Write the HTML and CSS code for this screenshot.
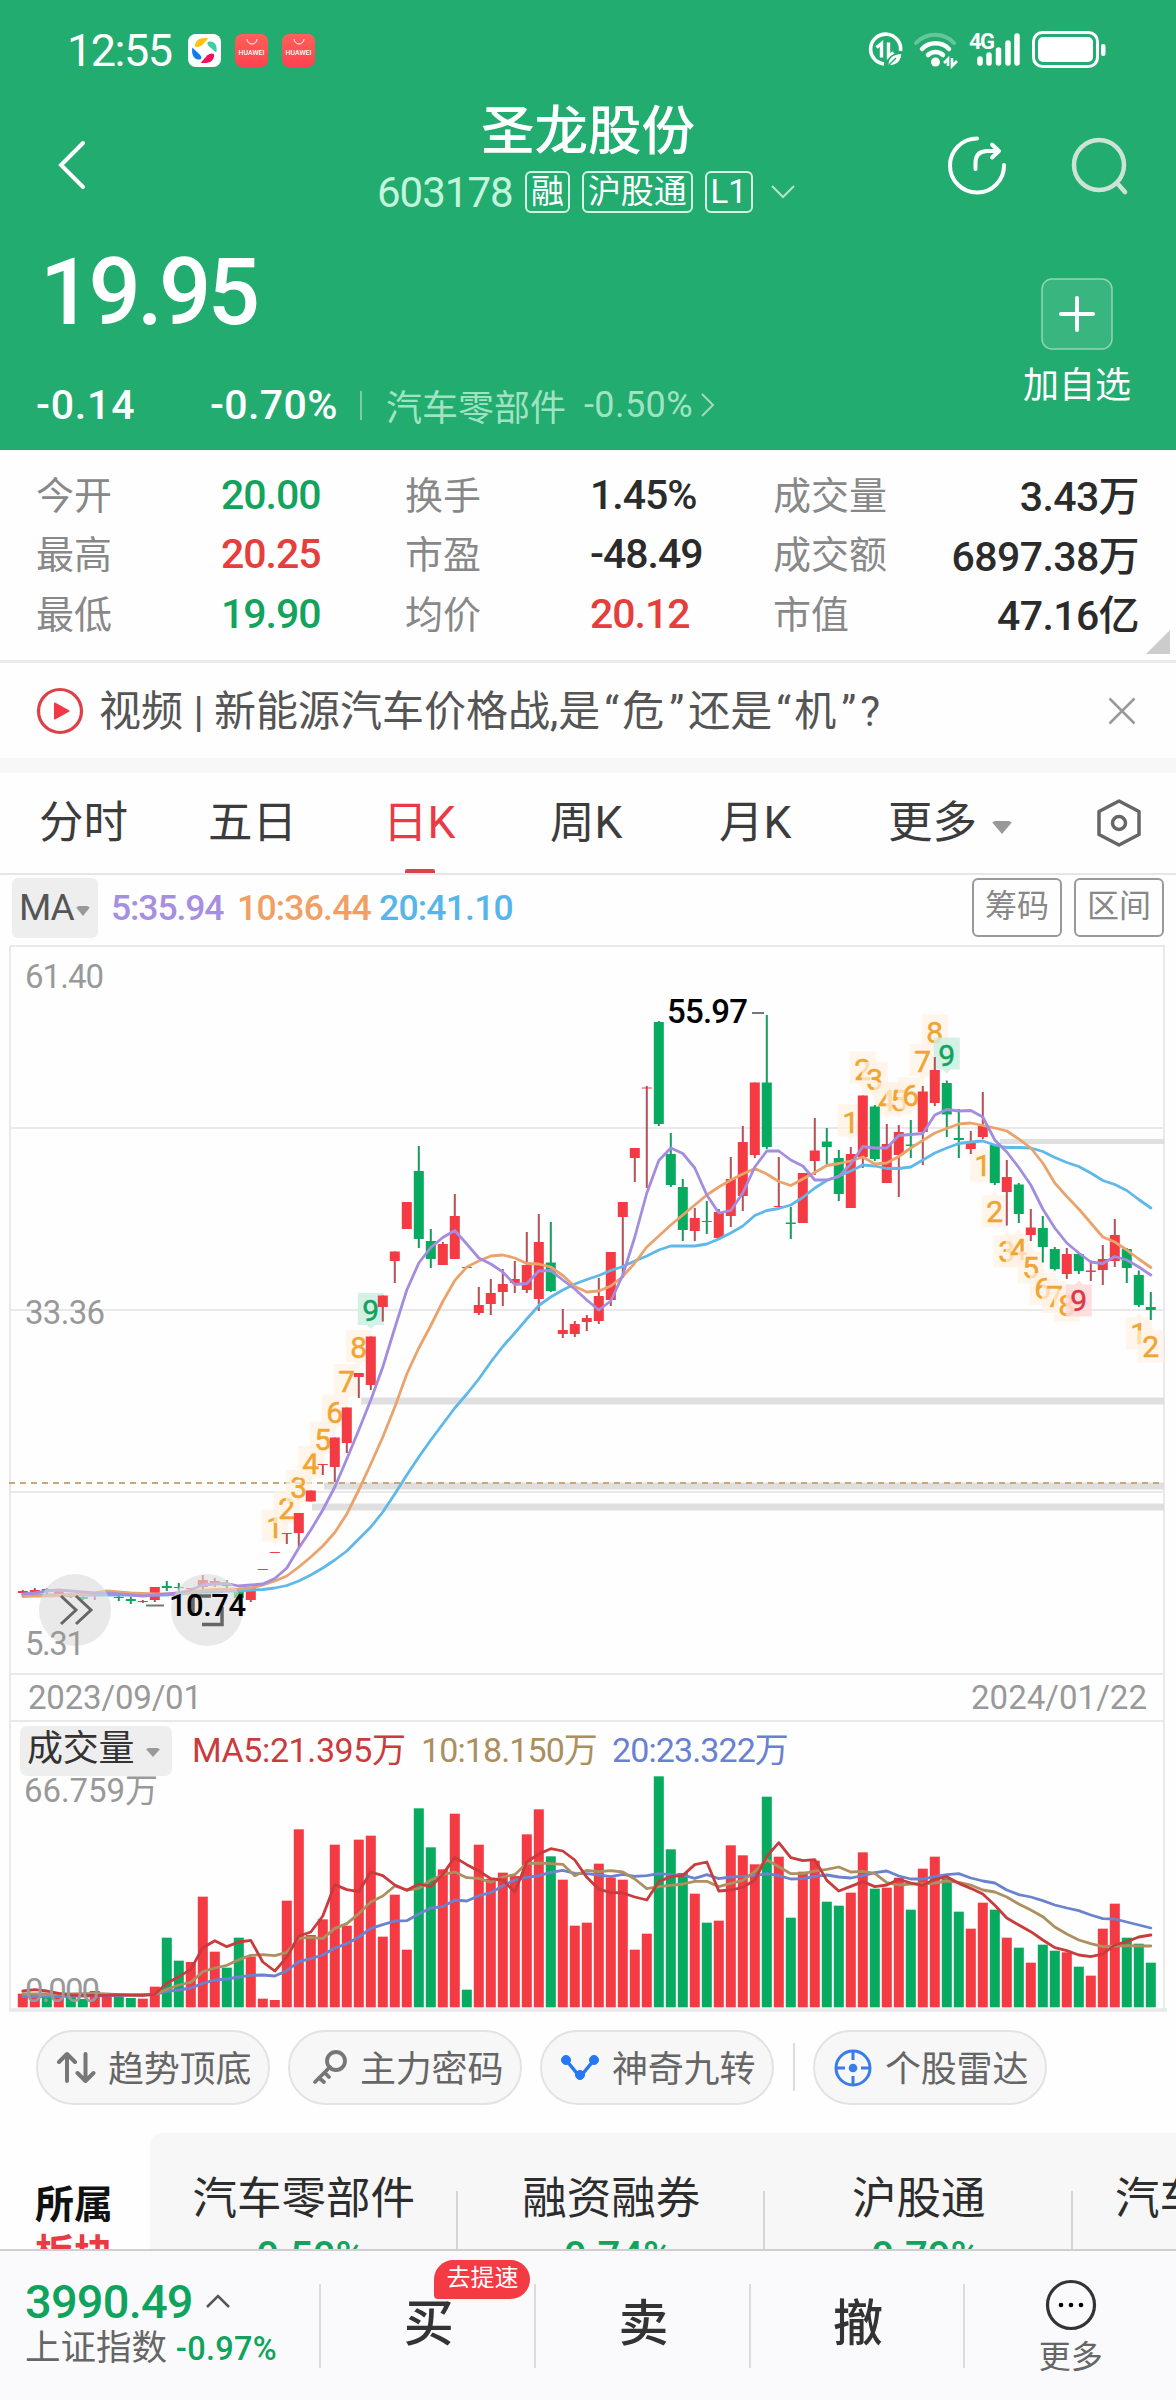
FILE: index.html
```html
<!DOCTYPE html>
<html lang="zh-CN">
<head>
    <meta charset="UTF-8">
    <meta name="viewport" content="width=device-width, initial-scale=1.0">
    <title>圣龙股份 603178</title>
    <link rel="stylesheet" href="styles.css">
</head>
<body>
    <div class="header">
        <div class="status-bar">
            <span class="clock">12:55</span>
            <svg class="app-icon" viewBox="0 0 34 34">
                <rect width="34" height="34" rx="8" fill="#fff"/>
                <path d="M7 13C7 6 13 3 21 4.500L14 12Q10 14 7 13Z" fill="#fdc40f"/>
                <path d="M21 8C27 6 31 12 29 19L21 12Q19 9 21 8Z" fill="#3ccfa4"/>
                <path d="M27 21C27 28 21 31 13 29.500L20 22Q24 19 27 21Z" fill="#f3115c"/>
                <path d="M13 26C7 28 3 22 4.500 14L12 21Q15 24 13 26Z" fill="#0c7cf5"/>
            </svg>
            <div class="huawei"><svg width="12" height="7" viewBox="0 0 12 7"><path d="M1 0a5 5 0 0 0 10 0" fill="none" stroke="#fff" stroke-width="1"/></svg>HUAWEI</div>
            <div class="huawei"><svg width="12" height="7" viewBox="0 0 12 7"><path d="M1 0a5 5 0 0 0 10 0" fill="none" stroke="#fff" stroke-width="1"/></svg>HUAWEI</div>
            <svg class="status-icons" width="240" height="40" viewBox="0 0 240 40" fill="none" stroke="#fff">
                <path d="M32.500 21A15 15 0 1 0 16 34" stroke-width="3.600"/>
                <path d="M8.500 17.500l5-4v14M20.500 12.500v14l5-4" stroke-width="3.400"/>
                <path d="M34 23c-10 1-15 5-14 13 9 0 14-4 14-13z" fill="#fff" stroke="#22ac70" stroke-width="1.500"/>
                <path d="M21 35l7-7" stroke="#22ac70" stroke-width="1.500"/>
                <path d="M48 13a26 26 0 0 1 38 0" stroke="#66c69b" stroke-width="4" stroke-linecap="round"/>
                <path d="M54 19a19 19 0 0 1 27 0M60 25a11 11 0 0 1 15 0" stroke-width="4.500" stroke-linecap="round"/>
                <circle cx="67.500" cy="32" r="4.500" fill="#fff" stroke="none"/>
                <path d="M76 33l4-4v7M84 28v8l5-5" stroke-width="2.600"/>
                <text x="101" y="19" class="net">4G</text>
                <path d="M112 29v4M121 25v8M130.500 20v13M140 13v20M149 6v27" stroke-width="5.500" stroke-linecap="round"/>
                <rect x="165.500" y="2.500" width="64" height="34" rx="9" stroke-width="3"/>
                <rect x="170" y="7" width="55" height="25" rx="5" fill="#fff" stroke="none"/>
                <rect x="233" y="14" width="4.500" height="12" rx="2" fill="#fff" stroke="none"/>
            </svg>
        </div>
        <div class="nav">
            <svg class="back" width="28" height="50" viewBox="0 0 28 50"><path d="M25 3L3 25l22 22" fill="none" stroke="#fff" stroke-width="4" stroke-linecap="round"/></svg>
            <div class="title">
                <h1>圣龙股份</h1>
                <div class="code-row">
                    <span class="code">603178</span>
                    <span class="tag">融</span>
                    <span class="tag">沪股通</span>
                    <span class="tag">L1</span>
                    <svg width="24" height="14" viewBox="0 0 24 14"><path d="M1 1l11 11L23 1" fill="none" stroke="#b5e3cc" stroke-width="2"/></svg>
                </div>
            </div>
            <svg class="share" width="60" height="60" viewBox="0 0 60 60" fill="none" stroke="#fff" stroke-width="4" stroke-linecap="round" stroke-linejoin="round">
                <path d="M30 3.500A27 27 0 1 0 57 30M28.500 34v-6q0-12 12-12H51M45 9.500l7 6.500-7 6.500"/>
            </svg>
            <svg class="search" width="58" height="60" viewBox="0 0 58 60" fill="none" stroke="#cde3d6" stroke-width="4.500" stroke-linecap="round">
                <circle cx="28" cy="30" r="25"/><path d="M46 48l8 9"/>
            </svg>
        </div>
        <div class="quote">
            <div>
                <div class="price">19.95</div>
                <div class="change">
                    <span class="diff">-0.14</span>
                    <span class="pct">-0.70%</span>
                    <span class="industry">汽车零部件</span>
                    <span class="industry-pct">-0.50%</span>
                    <svg width="14" height="26" viewBox="0 0 14 26"><path d="M1 2l11 11L1 24" fill="none" stroke="#a0dabd" stroke-width="2"/></svg>
                </div>
            </div>
            <div class="add">
                <svg width="72" height="72" viewBox="0 0 72 72"><rect x="1" y="1" width="70" height="70" rx="10" fill="#39b57f" stroke="#90d5b4" stroke-width="1.500"/><path d="M36 20v32M20 36h32" stroke="#fff" stroke-width="4" stroke-linecap="round"/></svg>
                <span>加自选</span>
            </div>
        </div>
    </div>

    <div class="stats">
        <span>今开</span><b class="down">20.00</b><span>换手</span><b>1.45%</b><span>成交量</span><b class="last">3.43万</b>
        <span>最高</span><b class="up">20.25</b><span>市盈</span><b>-48.49</b><span>成交额</span><b class="last">6897.38万</b>
        <span>最低</span><b class="down">19.90</b><span>均价</span><b class="up">20.12</b><span>市值</span><b class="last">47.16亿</b>
        <i class="corner"></i>
    </div>

    <div class="news">
        <svg width="48" height="48" viewBox="0 0 48 48"><circle cx="24" cy="24" r="21.500" fill="none" stroke="#df3f49" stroke-width="3.200"/><path d="M19 16.500l13.500 7.500L19 31.500z" fill="#f23745" stroke="#f23745" stroke-width="2" stroke-linejoin="round"/></svg>
        <p>视频 | 新能源汽车价格战,是<q>危</q>还是<q>机</q>?</p>
        <svg class="close" width="28" height="28" viewBox="0 0 28 28"><path d="M1.500 1.500l25 25M26.500 1.500l-25 25" stroke="#999" stroke-width="2.500"/></svg>
    </div>

    <div class="tabs">
        <span>分时</span>
        <span>五日</span>
        <span class="active">日K</span>
        <span>周K</span>
        <span>月K</span>
        <span class="more">更多<i class="arrow"></i></span>
        <svg width="46" height="50" viewBox="0 0 46 50" fill="none" stroke="#666" stroke-width="3.500" stroke-linejoin="round"><path d="M23 3L43 13.500v23L23 47 3 36.500v-23z"/><circle cx="23" cy="25" r="6.500"/></svg>
    </div>

    <div class="ma-row">
        <span class="ma-btn">MA<i class="arrow"></i></span>
        <span class="ma5">5:35.94</span>
        <span class="ma10">10:36.44</span>
        <span class="ma20">20:41.10</span>
        <span class="box-btn">筹码</span>
        <span class="box-btn">区间</span>
    </div>

    <div class="chart-wrap">
        <svg id="chart" width="1176" height="1072" viewBox="0 940 1176 1072">
            <g class="grid">
                <path d="M10 946H1164V2010M10 946V2010M10 1128H1164M10 1310H1164M10 1492H1164M10 1674H1164M10 1721H1164"/>
                <path d="M9 2010H1167" stroke-width="3.500"/>
            </g>
            <g class="gaps">
                <path d="M1000 1141.500H1164" stroke-width="5"/>
                <path d="M361 1401H1164M324 1486H1164M312 1507H1164" stroke-width="7"/>
            </g>
            <path d="M9 1483H1164" stroke="#c9a878" stroke-width="2" stroke-dasharray="6 5"/>
            <g id="marks"></g>
            <g id="candles"></g>
            <g id="lines"></g>
            <g class="floats">
                <circle cx="75" cy="1610" r="36"/>
                <circle cx="207" cy="1610" r="36"/>
                <path d="M61 1596l15 14-15 14M76 1596l15 14-15 14" stroke-width="3"/>
                <path d="M211 1596H193V1616M202 1624.500H222V1607" stroke-width="3.500"/>
            </g>
            <path d="M146 1605.500H164M752 1013H764" stroke="#777" stroke-width="2"/>
            <text class="extreme" x="169" y="1616" font-size="31" textLength="77">10.74</text>
            <text class="extreme" x="667" y="1023" font-size="33" textLength="81">55.97</text>
            <g class="axis" font-size="33">
                <text x="25" y="988" textLength="79">61.40</text>
                <text x="25" y="1324" textLength="80">33.36</text>
                <text x="25" y="1655" textLength="60">5.31</text>
                <text x="28" y="1709" textLength="174">2023/09/01</text>
                <text x="971" y="1709" textLength="176">2024/01/22</text>
            </g>
            <g id="volumes"></g>
            <g id="vol-lines"></g>
            <g class="axis" font-size="33">
                <text x="24" y="1802" textLength="134">66.759万</text>
                <text x="25" y="2002" textLength="75">0.000</text>
            </g>
        </svg>
        <div class="vol-row">
            <span class="vol-btn">成交量<i class="arrow"></i></span>
            <span class="v5">MA5:21.395万</span>
            <span class="v10">10:18.150万</span>
            <span class="v20">20:23.322万</span>
        </div>
    </div>

    <div class="chips">
        <span class="chip"><svg width="40" height="36" viewBox="0 0 40 36" fill="none" stroke="#777" stroke-width="4" stroke-linecap="round" stroke-linejoin="round"><path d="M11 31V4M3 12l8-8 8 8M29.500 4v27M21.500 23l8 8 8-8"/></svg><span>趋势顶底</span></span>
        <span class="chip"><svg width="40" height="36" viewBox="0 0 40 36" fill="none" stroke="#777" stroke-width="3.800" stroke-linecap="round"><circle cx="28" cy="11" r="9"/><path d="M22 17L7 32M11 28l5 4M17 23l4 4"/></svg><span>主力密码</span></span>
        <span class="chip"><svg width="40" height="36" viewBox="0 0 40 36" fill="#2577f5" stroke="#2577f5"><path d="M6 10l14 17L34 10" fill="none" stroke-width="3.500"/><circle cx="6" cy="10" r="4.500"/><circle cx="34" cy="10" r="4.500"/><circle cx="20" cy="25" r="4.500"/></svg><span>神奇九转</span></span>
        <i class="split"></i>
        <span class="chip"><svg width="40" height="40" viewBox="0 0 40 40" fill="none" stroke="#3b7de8" stroke-width="3"><circle cx="20" cy="20" r="17"/><path d="M20 3v9M20 28v9M3 20h9M28 20h9"/><circle cx="20" cy="20" r="2.800" fill="#3b7de8"/></svg><span>个股雷达</span></span>
    </div>

    <div class="board">
        <div class="board-label">所属<em>板块</em></div>
        <div class="board-list">
            <div class="board-item">汽车零部件<b>-0.50%</b></div>
            <div class="board-item">融资融券<b>-0.74%</b></div>
            <div class="board-item">沪股通<b>-0.79%</b></div>
            <div class="board-item">汽车零部件<b>-0.50%</b></div>
        </div>
    </div>

    <div class="footer">
        <div class="index">
            <div class="index-value">3990.49 <svg width="26" height="16" viewBox="0 0 26 16"><path d="M2 14L13 3l11 11" fill="none" stroke="#555" stroke-width="2.500"/></svg></div>
            <div class="index-name">上证指数 <b>-0.97%</b></div>
        </div>
        <div class="action">买<span class="badge">去提速</span></div>
        <div class="action">卖</div>
        <div class="action">撤</div>
        <div class="footer-more">
            <svg width="52" height="52" viewBox="0 0 52 52"><circle cx="26" cy="26" r="23.500" fill="none" stroke="#333" stroke-width="3.200"/><circle cx="16" cy="26" r="2.300"/><circle cx="26" cy="26" r="2.300"/><circle cx="36" cy="26" r="2.300"/></svg>
            更多
        </div>
    </div>
    <script src="chart.js"></script>
</body>
</html>
```
FILE: styles.css
```css
* {
    box-sizing: border-box;
}

body {
    margin: 0;
    width: 1176px;
    height: 2400px;
    overflow: hidden;
    background-color: #fefefe;
    color: #333;
    font-family: Roboto, "Noto Sans CJK SC", sans-serif;
}

svg {
    flex: none;
    display: block;
}

i, em {
    font-style: normal;
}

.header {
    height: 450px;
    background-color: #22ac70;
    color: #fff;
}

.status-bar {
    height: 100px;
    display: flex;
    align-items: center;
    padding-left: 67px;
}

.clock {
    width: 121px;
    font-size: 45px;
    letter-spacing: -1.5px;
}

.app-icon {
    width: 33px;
    height: 33px;
}

.huawei {
    width: 33px;
    height: 33px;
    margin-left: 14px;
    padding-top: 5px;
    border-radius: 7px;
    background: linear-gradient(#ff6158, #ff4250);
    display: flex;
    flex-direction: column;
    align-items: center;
    font-size: 7px;
    line-height: 14px;
    font-weight: 500;
}

.status-icons {
    margin-left: auto;
    margin-right: 68px;
}

.net {
    font-size: 22px;
    font-weight: 700;
    fill: #fff;
    stroke: none;
    letter-spacing: -1.5px;
}

.nav {
    height: 120px;
    display: flex;
}

.back {
    margin: 40px 0 0 58px;
}

.title {
    width: 500px;
    margin-left: 252px;
    padding-top: 2px;
    text-align: center;
}

.title h1 {
    margin: 0;
    font-size: 53.5px;
    line-height: 60px;
    font-weight: 500;
}

.code-row {
    height: 60px;
    margin-left: 39px;
    display: flex;
    align-items: center;
}

.code {
    width: 135px;
    margin-right: 13px;
    font-size: 42px;
    letter-spacing: -1px;
    color: #c3f5dc;
}

.tag {
    height: 42px;
    margin-right: 12px;
    padding: 0 4px;
    border: 2px solid #d5f6e6;
    border-radius: 6px;
    font-size: 33px;
    line-height: 37px;
    letter-spacing: -0.1px;
}

.tag + svg {
    margin-left: 6px;
}

.share {
    margin: 35px 0 0 109px;
}

.search {
    margin: 35px 0 0 64px;
}

.quote {
    height: 230px;
    display: flex;
    justify-content: space-between;
}

.price {
    height: 146px;
    padding-left: 40px;
    font-size: 92px;
    line-height: 146px;
    font-weight: 500;
    letter-spacing: -3.7px;
}

.change {
    height: 78px;
    display: flex;
    align-items: center;
    padding-left: 36px;
    font-size: 41px;
    font-weight: 500;
}

.diff {
    width: 174px;
    letter-spacing: 0.8px;
}

.pct {
    width: 152px;
    position: relative;
    letter-spacing: 0.4px;
}

.pct::after {
    content: "";
    position: absolute;
    right: 0;
    top: 10px;
    width: 2px;
    height: 29px;
    background-color: #7acda6;
}

.industry, .industry-pct {
    margin-left: 24px;
    font-size: 36px;
    font-weight: 400;
    color: #a0e3c2;
}

.industry-pct {
    margin: 0 8px 0 18px;
    letter-spacing: 0.4px;
}

.add {
    width: 110px;
    margin-right: 44px;
    padding-top: 58px;
    display: flex;
    flex-direction: column;
    align-items: center;
    font-size: 36px;
    line-height: 73px;
}

.stats {
    position: relative;
    height: 213px;
    padding: 15px 37px 0 36px;
    border-bottom: 3px solid #eaeaea;
    display: grid;
    grid-template-columns: 185px 184px 185px 183px 130px 1fr;
    grid-auto-rows: 59.5px;
    align-items: center;
    font-size: 38px;
    color: #888;
}

.stats span {
    margin-top: -5px;
}

.stats b {
    font-size: 41px;
    font-weight: 500;
    letter-spacing: -1px;
    color: #2b2b2b;
}

.stats .last {
    text-align: right;
    white-space: nowrap;
    letter-spacing: -0.6px;
    margin-top: -3px;
}

.stats .up {
    color: #e53e3c;
}

.stats .down {
    color: #13a35d;
}

.corner {
    position: absolute;
    right: 6px;
    bottom: 6px;
    border-left: 24px solid transparent;
    border-bottom: 24px solid #ccc;
}

.news {
    height: 95px;
    padding: 0 40px 0 36px;
    display: flex;
    align-items: center;
}

.news p {
    margin: 0 0 6px 15px;
    font-size: 42px;
    color: #555;
}

.news q {
    quotes: "“" "”";
}

.news q::before {
    margin: 0 3px 0 4px;
}

.news q::after {
    margin: 0 4px 0 5px;
}

.close {
    margin-left: auto;
}

.tabs {
    height: 117px;
    padding: 0 34px 0 39px;
    border-top: 15px solid #f7f7f7;
    border-bottom: 2px solid #e6e6e6;
    display: flex;
    align-items: center;
    font-size: 44.5px;
    color: #3c3c3c;
}

.tabs span {
    height: 100%;
    line-height: 100px;
    width: 169px;
}

.tabs .active {
    position: relative;
    width: 173px;
    color: #ea3a44;
    padding-left: 6px;
}

.tabs .active::after {
    content: "";
    position: absolute;
    left: 28px;
    bottom: 0;
    width: 30px;
    height: 4px;
    border-radius: 2px 2px 0 0;
    background-color: #d9434c;
}

.tabs .more {
    width: 150px;
    white-space: nowrap;
}

.tabs svg {
    margin-left: auto;
}

.arrow {
    display: inline-block;
    border: 11px solid transparent;
    border-top: 13px solid #999;
    border-bottom: 0;
    border-radius: 5px;
    vertical-align: 4px;
}

.more .arrow {
    margin-left: 14px;
}

.ma-row {
    height: 65px;
    padding: 0 12px;
    display: flex;
    align-items: center;
    font-size: 35.5px;
    font-weight: 500;
    letter-spacing: -1.1px;
}

.ma-btn {
    width: 86px;
    height: 60px;
    margin-right: 13px;
    padding-left: 7px;
    border-radius: 6px;
    background-color: #eee;
    font-size: 37px;
    font-weight: 400;
    line-height: 60px;
    color: #555;
    white-space: nowrap;
}

.ma-btn .arrow {
    border-width: 10px 8px 0;
    margin-left: 1px;
}

.ma5 {
    color: #a68fe0;
    width: 126px;
}

.ma10 {
    color: #f0a064;
    width: 142px;
    letter-spacing: -0.8px;
}

.ma20 {
    color: #57b5ea;
    margin-right: auto;
    letter-spacing: -0.8px;
}

.box-btn {
    width: 90px;
    height: 59px;
    margin-left: 12px;
    border: 2px solid #999;
    border-radius: 6px;
    text-align: center;
    font-size: 32px;
    font-weight: 400;
    line-height: 52px;
    letter-spacing: 0;
    color: #888;
}

.chart-wrap {
    position: relative;
    height: 1072px;
}

.grid {
    fill: none;
    stroke: #e9e9e9;
    stroke-width: 2;
}

.gaps {
    stroke: #dfdfdf;
}

.floats circle {
    fill: #dcdcdc;
    fill-opacity: 0.62;
}

.floats path {
    fill: none;
    stroke: #666;
}

.extreme {
    fill: #000;
    font-weight: 500;
}

.axis {
    fill: #999;
}

.red {
    fill: #f43a43;
}

.green {
    fill: #06ab5f;
}

.wick-red {
    fill: #b55058;
}

.wick-green {
    fill: #149c5c;
}

.line {
    fill: none;
    stroke-width: 2.8;
    stroke-linejoin: round;
    stroke-linecap: round;
}

.mark path {
    fill: #fff1e3;
    fill-opacity: 0.72;
}

.mark text {
    font-size: 30px;
    text-anchor: middle;
    fill: #f0a431;
    stroke: #f0a431;
    stroke-width: 0.5;
}

.mark.sell path {
    fill: #ccefe0;
    fill-opacity: 0.85;
}

.mark.sell text {
    fill: #10a35d;
    stroke: #10a35d;
}

.mark.buy path {
    fill: #ffd8db;
    fill-opacity: 0.85;
}

.mark.buy text {
    fill: #dd3847;
    stroke: #dd3847;
}

.vol-row {
    position: absolute;
    left: 20px;
    top: 786px;
    height: 50px;
    display: flex;
    align-items: center;
    font-size: 34px;
    line-height: 46px;
    letter-spacing: -0.9px;
}

.vol-row span {
    margin-top: -3px;
}

.vol-row .vol-btn {
    width: 152px;
    height: 50px;
    margin: 0 20px 0 0;
    padding-left: 7px;
    border-radius: 7px;
    background-color: #eee;
    font-size: 36px;
    letter-spacing: -0.3px;
    line-height: 47px;
    white-space: nowrap;
}

.vol-btn .arrow {
    margin-left: 11px;
    border-width: 9px 8px 0;
}

.v5 {
    width: 229px;
    color: #c93b3c;
    letter-spacing: -0.4px;
}

.v10 {
    width: 191px;
    color: #ab8f5f;
}

.v20 {
    color: #6881d0;
}

.chips {
    height: 121px;
    padding: 18px 36px 0;
    display: flex;
    align-items: flex-start;
}

.chip {
    width: 234px;
    height: 75px;
    margin-right: 18px;
    padding-left: 18px;
    border: 2px solid #e3e3e3;
    border-radius: 38px;
    background-color: #f7f7f7;
    display: flex;
    align-items: center;
    font-size: 36px;
    letter-spacing: -0.2px;
    color: #666;
    white-space: nowrap;
}

.chip svg {
    margin-right: 12px;
}

.chip span {
    margin-top: -4px;
}

.split {
    width: 2px;
    height: 48px;
    margin: 13px 18px 0 1px;
    background-color: #ddd;
}

.board {
    height: 116px;
    display: flex;
    overflow: hidden;
}

.board-label {
    width: 150px;
    flex: none;
    padding: 46px 0 0 35px;
    font-size: 39px;
    line-height: 52px;
    font-weight: 700;
    color: #111;
}

.board-label em {
    display: block;
    margin-top: -3px;
    color: #ea3a44;
}

.board-list {
    width: 1026px;
    height: 180px;
    background-color: #f7f7f7;
    border-top-left-radius: 12px;
    display: flex;
    overflow: hidden;
}

.board-item {
    position: relative;
    width: 307.5px;
    flex: none;
    padding-top: 36px;
    text-align: center;
    font-size: 44.5px;
    line-height: 60px;
    color: #2d2d2d;
}

.board-item::after {
    content: "";
    position: absolute;
    right: 0;
    top: 58px;
    width: 2px;
    height: 100px;
    background-color: #d5d5d5;
}

.board-item b {
    display: block;
    margin-top: -2px;
    font-size: 40px;
    font-weight: 500;
    color: #13a35d;
}

.footer {
    height: 152px;
    padding-left: 25px;
    border-top: 2px solid #cfcfcf;
    background-color: #fafafc;
    display: flex;
}

.index {
    width: 297px;
    padding-top: 22px;
}

.index-value {
    height: 56px;
    display: flex;
    align-items: center;
    gap: 12px;
    font-size: 47px;
    font-weight: 500;
    letter-spacing: -0.8px;
    color: #10a35d;
}

.index-name {
    font-size: 35.5px;
    line-height: 38px;
    color: #666;
    white-space: nowrap;
}

.index-name b {
    font-size: 32.5px;
    font-weight: 500;
    letter-spacing: 0.3px;
    color: #10a35d;
}

.action {
    position: relative;
    width: 215px;
    font-size: 50px;
    line-height: 147px;
    font-weight: 500;
    text-align: center;
}

.action::before, .footer-more::before {
    content: "";
    position: absolute;
    left: -2px;
    top: 33px;
    width: 2px;
    height: 84px;
    background-color: #dcdcdc;
}

.badge {
    position: absolute;
    left: 113px;
    top: 9px;
    width: 96px;
    height: 39px;
    border-radius: 20px 20px 20px 4px;
    background-color: #f43a43;
    color: #fff;
    font-size: 24px;
    line-height: 36px;
    font-weight: 400;
}

.footer-more {
    position: relative;
    width: 211px;
    padding-top: 28px;
    display: flex;
    flex-direction: column;
    align-items: center;
    font-size: 32px;
    line-height: 52px;
    color: #666;
}
```
FILE: chart.js
```js
const NS = 'http://www.w3.org/2000/svg';
const x = i => 22.8 + i * 12;

// bars that closed down
const down = [2, 4, 5, 8, 9, 12, 13, 17, 18, 33, 34, 37, 44, 53, 54, 55, 57, 62, 64, 67, 68, 71,
    74, 77, 78, 81, 83, 85, 86, 88, 92, 93, 94];

// body top, body bottom, high, low
const candles = [
    [1591, 1593, 1590, 1594], [1590, 1592, 1588, 1594], [1589, 1592, 1588, 1594], [1591, 1594, 1590, 1595],
    [1594, 1597, 1593, 1598], [1597, 1599, 1595, 1600], [1593, 1595, 1592, 1600], [1591, 1593, 1590, 1595],
    [1597, 1598, 1595, 1601], [1599, 1601, 1597, 1604], [1601, 1602, 1600, 1603], [1587, 1600, 1587, 1602],
    [1586, 1588, 1581, 1591], [1587, 1588, 1583, 1592], [1588, 1589, 1588, 1589], [1580, 1587, 1575, 1590],
    [1581, 1584, 1578, 1587], [1583, 1586, 1580, 1590], [1590, 1598, 1588, 1605], [1588, 1600, 1588, 1602],
    [1569, 1570, 1569, 1570], [1552, 1553, 1552, 1553], [1533, 1534, 1533, 1544], [1513, 1533, 1513, 1547],
    [1490.5, 1501.5, 1490.5, 1501.5], [1464, 1465, 1464, 1475], [1437.5, 1467, 1437.5, 1482], [1407.5, 1443, 1407.5, 1453],
    [1373, 1377, 1373, 1398], [1336.5, 1385, 1336.5, 1390], [1295.5, 1307, 1295.5, 1321.5], [1251.5, 1261, 1251.5, 1283],
    [1202, 1229, 1202, 1229], [1171, 1239, 1146, 1248], [1241, 1259, 1229, 1268], [1244, 1265, 1242, 1265],
    [1216, 1259, 1194, 1259], [1267, 1268, 1267, 1268], [1305, 1313, 1287, 1315], [1293, 1304, 1279, 1315],
    [1284, 1292, 1269, 1306], [1279, 1283, 1261, 1293], [1265, 1290, 1232, 1293], [1242, 1299, 1214, 1311],
    [1262.5, 1291, 1222, 1292], [1330, 1334, 1309, 1338], [1324, 1334, 1321, 1337], [1318, 1322, 1315, 1331],
    [1296, 1321, 1278, 1324], [1252, 1300, 1252, 1306], [1202, 1217, 1202, 1278], [1148, 1158, 1148, 1182],
    [1087.5, 1088.5, 1086, 1188], [1022, 1124, 1021, 1126], [1154, 1185, 1133, 1187], [1187, 1230, 1179, 1241],
    [1218, 1231, 1208, 1241], [1221, 1222, 1201, 1234], [1212, 1238, 1209, 1238], [1179, 1216, 1157, 1227],
    [1142, 1196, 1126, 1211], [1082.5, 1155, 1082.5, 1158], [1082.5, 1147, 1015, 1149], [1206, 1207, 1157, 1207],
    [1222.5, 1224, 1207, 1239], [1173, 1223, 1173, 1223], [1150.5, 1161, 1118, 1175], [1141.5, 1147, 1128, 1164],
    [1158, 1194, 1150, 1201], [1154, 1208, 1147, 1208], [1095.5, 1157, 1095.5, 1168], [1106.5, 1159, 1105, 1161],
    [1144, 1183, 1124, 1183], [1132, 1155, 1125, 1197], [1144.5, 1146, 1120, 1158], [1091.5, 1132, 1086, 1165],
    [1070, 1103, 1057, 1106], [1083, 1114.5, 1080.5, 1137], [1138, 1140, 1109, 1158], [1142.5, 1149, 1131, 1154],
    [1126, 1137, 1092, 1139], [1145, 1183, 1145, 1185], [1177, 1192, 1160, 1225.5], [1184.5, 1214, 1183, 1223],
    [1227.5, 1235, 1209, 1241], [1228, 1247, 1216, 1262.5], [1249, 1269, 1247, 1270.5], [1254, 1274, 1248, 1279],
    [1254, 1271, 1253, 1274], [1270.5, 1272, 1260.5, 1281], [1259, 1270, 1245, 1285], [1235, 1261, 1219, 1267],
    [1249, 1268, 1248, 1283], [1275, 1305, 1270.5, 1307], [1307, 1310, 1292, 1320]
];

const ma5 = [1594, 1593, 1591, 1590, 1591, 1592, 1593, 1593, 1594, 1595, 1596, 1595, 1594, 1593, 1590, 1585, 1584, 1583.5,
    1586, 1585, 1584, 1578.5, 1568, 1548, 1530, 1510, 1487, 1459, 1430, 1400, 1367, 1328, 1290, 1263, 1247.5, 1237.5,
    1230.5, 1244, 1258, 1264, 1272, 1284.5, 1283.5, 1271, 1270.5, 1280, 1289, 1300, 1310, 1301, 1275, 1237, 1193,
    1160.5, 1148, 1153.5, 1168, 1195, 1213, 1210.5, 1193, 1167, 1151, 1151, 1160, 1166, 1180, 1180, 1176.5, 1164,
    1146.5, 1148, 1148, 1135.5, 1134.5, 1133.5, 1115, 1109.5, 1111, 1110.5, 1117, 1140, 1152, 1167.5, 1185, 1209,
    1228, 1243, 1253, 1262, 1263.5, 1256.5, 1260, 1267, 1275];
const ma10 = [1596.5, 1596, 1596, 1595.5, 1595, 1594, 1593, 1591, 1592, 1593, 1593.5, 1594, 1594, 1593, 1592, 1590.5,
    1589.5, 1589.5, 1589, 1588, 1585, 1581, 1576, 1567, 1557, 1546, 1532.5, 1514, 1490, 1464, 1437, 1407, 1374, 1348,
    1325.5, 1301.5, 1280.5, 1267, 1261, 1256, 1255, 1258, 1263.5, 1264, 1267, 1275.5, 1286.5, 1292, 1291, 1286, 1276.5,
    1263, 1247, 1236, 1225, 1215, 1205, 1195, 1187, 1180, 1174, 1168.5, 1174, 1181.5, 1185.5, 1179, 1172.5, 1165.5,
    1163.5, 1161, 1157, 1164, 1163, 1156.5, 1148, 1140.5, 1133, 1128.5, 1124, 1123, 1125.5, 1128, 1131, 1139, 1148,
    1163, 1183, 1196.5, 1209, 1223, 1237, 1242, 1250, 1259, 1267.5];
const ma20 = [1595, 1595, 1595, 1595, 1595, 1595, 1595, 1595, 1595, 1595, 1595, 1595, 1595, 1594, 1593, 1592, 1592, 1591,
    1591, 1590, 1589.5, 1588, 1585.5, 1581, 1575, 1568, 1560, 1551, 1539, 1527, 1512, 1494, 1475, 1457, 1440, 1424,
    1408, 1394, 1379, 1362, 1346.5, 1333, 1319, 1305.5, 1297, 1290, 1284, 1279.5, 1275.5, 1270.5, 1266.5, 1261, 1256,
    1250, 1246, 1246, 1246, 1244, 1239, 1233, 1226, 1215.5, 1210.5, 1208.5, 1205, 1197.5, 1188, 1180.5, 1176, 1171,
    1165, 1166, 1168.5, 1168.5, 1167, 1160, 1153, 1148, 1143.5, 1142, 1141, 1145, 1147.5, 1147.5, 1148, 1151.5,
    1157.5, 1162.5, 1166.5, 1173, 1180.5, 1184.5, 1190.5, 1199.5, 1208];

// nine-turn marks: bar, label top, text, placed above the bar or not
const marks = [
    [21, 1509.5, 1, 1], [22, 1491, 2, 1], [23, 1470, 3, 1], [24, 1446, 4, 1], [25, 1421.5, 5, 1], [26, 1394.5, 6, 1],
    [27, 1364, 7, 1], [28, 1330, 8, 1], [29, 1293, 9, 1],
    [69, 1104.5, 1, 1], [70, 1051.5, 2, 1], [71, 1062, 3, 1], [72, 1082.5, 4, 1], [73, 1082.5, 5, 1], [74, 1077.5, 6, 1],
    [75, 1044, 7, 1], [76, 1014.5, 8, 1], [77, 1037.5, 9, 1],
    [80, 1150, 1, 0], [81, 1195.5, 2, 0], [82, 1235.5, 3, 0], [83, 1234, 4, 0], [84, 1251.5, 5, 0], [85, 1273, 6, 0],
    [86, 1281, 7, 0], [87, 1289.5, 8, 0], [88, 1284.5, 9, 0], [93, 1317.5, 1, 0], [94, 1330.5, 2, 0]
];

// volume pane values are depths, three units to a pixel, baseline 922
const vy = v => 1700 + v / 3;
const volumes = [881, 883, 888, 888, 890, 897, 873, 890, 890, 894, 896, 860, 713, 782, 786, 590, 755, 803, 713, 770, 896, 900,
    602, 388, 705, 658, 434, 677, 419, 407, 710, 584, 749, 325, 442, 508, 341, 869, 434, 536, 518, 528, 403, 328, 469,
    539, 677, 668, 491, 533, 539, 749, 701, 229, 448, 519, 581, 668, 662, 436, 466, 493, 290, 470, 653, 515, 482, 605,
    617, 578, 457, 566, 563, 533, 629, 506, 470, 535, 635, 686, 608, 629, 713, 743, 788, 734, 752, 757, 800, 827, 686,
    611, 713, 731, 788];
const vma5 = [873, 869, 873, 880, 885, 886, 886, 886, 884, 885, 885, 883, 850, 830, 808, 743, 722, 740, 726, 721, 786, 813,
    772, 708, 696, 648, 554, 569, 575, 516, 527, 555, 571, 552, 560, 523, 472, 494, 513, 536, 540, 576, 486, 462, 446,
    453, 480, 532, 568, 577, 579, 591, 600, 545, 530, 526, 494, 486, 573, 570, 562, 541, 469, 428, 473, 482, 479, 541,
    573, 559, 545, 560, 555, 538, 549, 556, 538, 530, 550, 565, 582, 616, 654, 675, 695, 720, 743, 752, 765, 770, 762,
    735, 725, 711, 705];
const vma10 = [882, 882, 882, 882, 882, 881, 880, 882, 884, 885, 885, 883, 868, 855, 847, 815, 804, 796, 779, 766, 764, 767,
    757, 715, 712, 716, 685, 671, 641, 606, 588, 558, 570, 565, 540, 524, 516, 533, 535, 547, 531, 524, 490, 489, 491,
    493, 527, 511, 515, 512, 516, 537, 566, 560, 556, 552, 544, 544, 560, 550, 541, 515, 479, 500, 521, 521, 513, 508,
    501, 516, 514, 520, 548, 555, 552, 552, 549, 543, 547, 555, 570, 576, 591, 612, 630, 650, 681, 702, 720, 731, 740,
    738, 737, 738, 738];
const vma20 = [890, 890, 890, 889, 889, 888, 888, 887, 887, 886, 886, 883, 874, 870, 864, 850, 840, 837, 831, 826, 825, 828,
    812, 785, 776, 765, 744, 731, 711, 685, 674, 663, 662, 642, 624, 620, 600, 603, 587, 578, 557, 540, 532, 527, 517,
    511, 520, 521, 525, 530, 523, 529, 527, 521, 524, 525, 535, 524, 536, 531, 529, 526, 521, 527, 537, 536, 529, 525,
    531, 534, 527, 518, 513, 528, 537, 537, 530, 524, 521, 534, 543, 549, 570, 584, 591, 602, 615, 624, 632, 645, 656,
    657, 666, 675, 684];

function add(parent, tag, attrs) {
    const el = document.createElementNS(NS, tag);
    for (const key in attrs) {
        el.setAttribute(key, attrs[key]);
    }
    parent.appendChild(el);
    return el;
}

function rect(parent, cls, left, top, width, height) {
    add(parent, 'rect', { class: cls, x: left, y: top, width: width, height: height });
}

function line(parent, color, values) {
    add(parent, 'polyline', {
        class: 'line',
        stroke: color,
        points: values.map((v, i) => x(i) + ',' + v).join(' ')
    });
}

const candleLayer = document.getElementById('candles');
candles.forEach(([top, bottom, high, low], i) => {
    const color = down.includes(i) ? 'green' : 'red';
    rect(candleLayer, 'wick-' + color, x(i) - 1, high, 2, low - high);
    rect(candleLayer, color, x(i) - 5, top, 10, bottom - top);
});

const markLayer = document.getElementById('marks');
marks.forEach(([i, top, text, above]) => {
    const kind = text === 9 ? (above ? ' sell' : ' buy') : '';
    const g = add(markLayer, 'g', { class: 'mark' + kind });
    const c = x(i);
    const notch = above
        ? `h26v32h-9l-4 4l-4 -4h-9z`
        : `h9l4 -4l4 4h9v32h-26z`;
    add(g, 'path', { d: `M${c - 13} ${top}${notch}` });
    add(g, 'text', { x: c, y: top + (above ? 28 : 26) }).textContent = text;
});

const lineLayer = document.getElementById('lines');
line(lineLayer, '#5eb8e8', ma20);
line(lineLayer, '#eba36c', ma10);
line(lineLayer, '#a48ddf', ma5);

const volumeLayer = document.getElementById('volumes');
volumes.forEach((v, i) => {
    rect(volumeLayer, down.includes(i) ? 'green' : 'red', x(i) - 5, vy(v), 10, vy(922) - vy(v));
});

const volLines = document.getElementById('vol-lines');
line(volLines, '#6b82cf', vma20.map(vy));
line(volLines, '#ac9060', vma10.map(vy));
line(volLines, '#c93b3c', vma5.map(vy));
```
